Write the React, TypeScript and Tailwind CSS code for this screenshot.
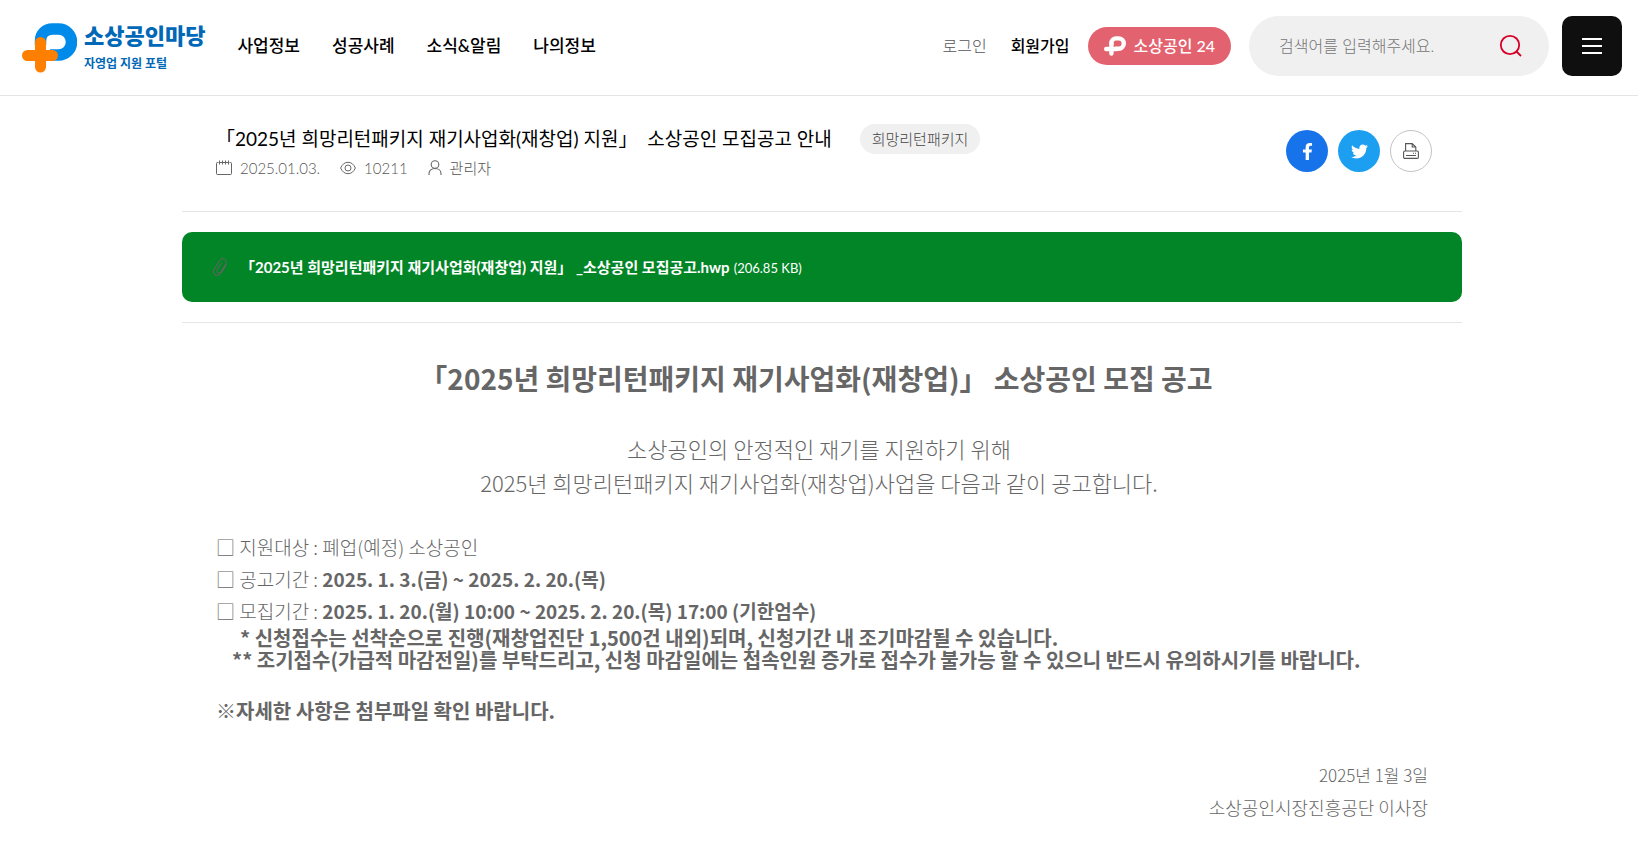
import { FaFacebookF, FaTwitter } from 'react-icons/fa';

const menu = ['사업정보', '성공사례', '소식&알림', '나의정보'];

const Logo = () => (
  <a href="#" className="mt-1 flex items-center gap-[7px] text-[#0068b7]">
    <svg width="55" height="50" viewBox="0 0 55 50" fill="none">
      <path
        d="M18.500 22V18C18.500 11 23.500 6 30.500 6H36.500a13 13 0 0 1 0 26H28"
        stroke="#008aea"
        strokeWidth="11.500"
      />
      <path d="M18.500 19.500v24.500M5.500 32.500h25" stroke="#ff8000" strokeWidth="11" strokeLinecap="round" />
    </svg>
    <span className="flex flex-col gap-2">
      <strong className="text-[22px] leading-6 font-black">소상공인마당</strong>
      <span className="text-xs leading-4 font-bold">자영업 지원 포털</span>
    </span>
  </a>
);

const Header = () => (
  <header className="h-24 pl-[22px] pr-4 pb-1 flex items-center justify-between border-b border-[#e5e5e5]">
    <div className="flex items-center gap-8">
      <Logo />
      <nav>
        <ul className="flex gap-8 text-[17px] leading-6 font-medium text-black">
          {menu.map((item) => (
            <li key={item}>
              <a href="#">{item}</a>
            </li>
          ))}
        </ul>
      </nav>
    </div>
    <div className="flex items-center">
      <a href="#" className="mr-6 text-base font-light text-[#555]">
        로그인
      </a>
      <a href="#" className="mr-[18px] text-base font-medium text-black">
        회원가입
      </a>
      <a
        href="#"
        className="h-[38px] mr-[18px] px-4 flex items-center gap-2 rounded-full bg-[#e3626f] text-base font-medium text-white"
      >
        <svg width="22" height="20" viewBox="0 0 55 50" fill="none" stroke="#fff" strokeWidth="11">
          <path d="M18.500 22V18C18.500 11 23.500 6 30.500 6H36.500a13 13 0 0 1 0 26H28" />
          <path d="M18.500 19.500v24.500M5.500 32.500h25" strokeLinecap="round" />
        </svg>
        소상공인 24
      </a>
      <form className="w-[300px] h-[60px] mr-[13px] pl-[30px] pr-[26px] flex items-center rounded-full bg-[#f0f0f0]">
        <input
          type="text"
          aria-label="검색어"
          placeholder="검색어를 입력해주세요."
          className="min-w-0 flex-1 text-base font-light outline-none placeholder:text-[#757575]"
        />
        <button type="button" aria-label="검색">
          <svg width="24" height="24" viewBox="0 0 24 24" fill="none" stroke="#d80027" strokeWidth="1.800">
            <circle cx="11" cy="11" r="9.200" />
            <path d="M17 17l5 5" />
          </svg>
        </button>
      </form>
      <button
        type="button"
        aria-label="전체메뉴"
        className="w-[60px] h-[60px] flex flex-col items-center justify-center gap-[5px] rounded-[10px] bg-[#0f0f0f]"
      >
        <span className="w-5 h-0.5 bg-white"></span>
        <span className="w-5 h-0.5 bg-white"></span>
        <span className="w-5 h-0.5 bg-white"></span>
      </button>
    </div>
  </header>
);

const PostHead = () => (
  <div className="h-[116px] pl-[34px] pr-[30px] pt-7 flex justify-between border-b border-[#e5e5e5]">
    <div>
      <div className="flex items-center gap-7">
        <h1 className="text-[19px] leading-[30px] text-black">
          「2025년 희망리턴패키지 재기사업화(재창업) 지원」&nbsp; 소상공인 모집공고 안내
        </h1>
        <span className="px-3 rounded-full bg-[#f0f0f0] text-[15px] leading-[30px] font-light text-[#444]">
          희망리턴패키지
        </span>
      </div>
      <ul className="flex gap-5 text-[15px] leading-7 font-light text-[#555]">
        <li className="flex items-center gap-2">
          <svg width="16" height="16" viewBox="0 0 16 16" fill="none" stroke="#666">
            <path d="M2.500 2.500H1.300a.8.8 0 0 0-.8.8v10.400c0 .5.300.8.800.8h13.400c.5 0 .8-.3.800-.8V3.300a.8.8 0 0 0-.8-.8h-1.200" />
            <path d="M3.500 0.500v4M6.500 0.500v4M9.500 0.500v4M12.500 0.500v4M4 2.500h8" />
          </svg>
          2025.01.03.
        </li>
        <li className="flex items-center gap-2">
          <svg width="16" height="14" viewBox="0 0 16 14" fill="none" stroke="#666">
            <path d="M.6 7C2.200 3.300 4.800 1.300 8 1.300S13.800 3.300 15.400 7C13.800 10.700 11.200 12.700 8 12.700S2.200 10.700.6 7z" />
            <circle cx="8" cy="7" r="3" />
          </svg>
          10211
        </li>
        <li className="flex items-center gap-2">
          <svg width="14" height="16" viewBox="0 0 14 16" fill="none" stroke="#666" strokeWidth="1.100">
            <circle cx="7" cy="4.500" r="3.800" />
            <path d="M1 15v-1.500C1 10.500 3.500 8.500 7 8.500s6 2 6 5V15" />
          </svg>
          관리자
        </li>
      </ul>
    </div>
    <div className="pt-1.5 flex gap-2.5">
      <button
        type="button"
        aria-label="페이스북"
        className="w-[42px] h-[42px] flex items-center justify-center rounded-full bg-[#1773ea]"
      >
        <FaFacebookF className="text-[17px] text-white" />
      </button>
      <button
        type="button"
        aria-label="트위터"
        className="w-[42px] h-[42px] flex items-center justify-center rounded-full bg-[#1c9ff1]"
      >
        <FaTwitter className="text-[17px] text-white" />
      </button>
      <button
        type="button"
        aria-label="인쇄"
        className="w-[42px] h-[42px] flex items-center justify-center rounded-full border border-[#c4c4c4]"
      >
        <svg width="16" height="16" viewBox="0 0 16 16" fill="none" stroke="#555" strokeWidth="1.100">
          <path d="M2.600 8V.6h6.600L12.800 4v4M9.200.6V4h3.600" />
          <rect x=".6" y="8" width="14.800" height="7.400" rx="1.200" />
          <path d="M3 12.500h10M10 10.200h1M12 10.200h1" />
        </svg>
      </button>
    </div>
  </div>
);

const Attachment = () => (
  <div className="py-5 border-b border-[#e5e5e5]">
    <a href="#" className="h-[70px] px-[30px] flex items-center gap-3 rounded-[10px] bg-[#028526] text-white">
      <svg width="16" height="18" viewBox="0 0 16 18" fill="none" stroke="#6e626c" strokeLinecap="round">
        <path d="M14.200 7L9 15.200C7.600 17.300 5 17.900 3.200 16.800S.6 13.600 1.800 11.700L7.600 2.600C8.700.9 10.800.2 12.600 1.200s2.200 3.200 1.200 4.900L8.700 13.900c-.7 1.100-2 1.500-3.100.9s-1.300-1.900-.6-3L9.300 5.200" />
      </svg>
      <span>
        <strong className="text-[15px] font-bold">
          「2025년 희망리턴패키지 재기사업화(재창업) 지원」 _소상공인 모집공고.hwp
        </strong>{' '}
        <span className="text-[13px]">(206.85 KB)</span>
      </span>
    </a>
  </div>
);

const Content = () => (
  <div className="pl-[34px] pr-[30px] pt-[34px] pb-5 font-['Noto_Sans_CJK_KR',sans-serif] text-[#666]">
    <h2 className="pr-4 text-center text-[28px] leading-[42px] font-bold">
      「2025년 희망리턴패키지 재기사업화(재창업)」 소상공인 모집 공고
    </h2>
    <div className="pt-8 pr-2.5 text-center text-[22px] leading-[34px] font-light">
      <p>소상공인의 안정적인 재기를 지원하기 위해</p>
      <p>2025년 희망리턴패키지 재기사업화(재창업)사업을 다음과 같이 공고합니다.</p>
    </div>
    <ul className="pt-8 text-[19px] leading-8 font-light">
      <li>□ 지원대상 : 폐업(예정) 소상공인</li>
      <li>
        □ 공고기간 : <b className="font-bold">2025. 1. 3.(금) ~ 2025. 2. 20.(목)</b>
      </li>
      <li>
        □ 모집기간 : <b className="font-bold">2025. 1. 20.(월) 10:00 ~ 2025. 2. 20.(목) 17:00 (기한엄수)</b>
      </li>
    </ul>
    <div className="text-xl leading-[22px] font-bold">
      <p className="pl-6">
        * 신청접수는 선착순으로 진행(재창업진단 1,500건 내외)되며, 신청기간 내 조기마감될 수 있습니다.
      </p>
      <p className="pl-4">
        ** 조기접수(가급적 마감전일)를 부탁드리고, 신청 마감일에는 접속인원 증가로 접수가 불가능 할 수 있으니 반드시
        유의하시기를 바랍니다.
      </p>
    </div>
    <p className="pt-6 text-xl leading-8 font-bold">※자세한 사항은 첨부파일 확인 바랍니다.</p>
    <div className="pt-8 pr-1 text-right font-light">
      <p className="text-[17px] leading-8">2025년 1월 3일</p>
      <p className="text-lg leading-8">소상공인시장진흥공단 이사장</p>
    </div>
  </div>
);

const App = () => {
  return (
    <div className="bg-white font-['Lato','Noto_Sans_CJK_KR',sans-serif]">
      <Header />
      <main className="pl-1.5">
        <article className="max-w-[1280px] mx-auto">
          <PostHead />
          <Attachment />
          <Content />
        </article>
      </main>
    </div>
  );
};

export default App;
